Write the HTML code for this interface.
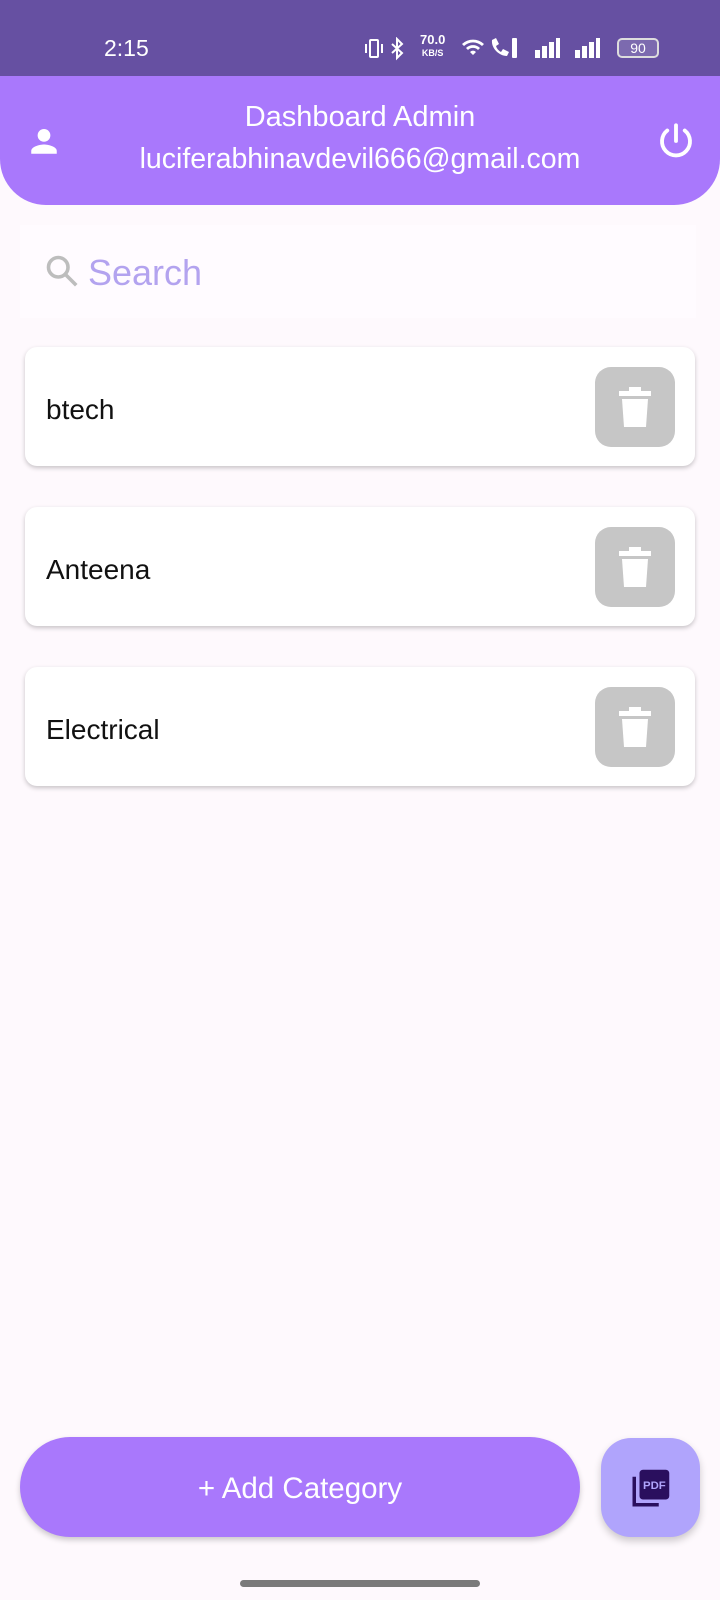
<!DOCTYPE html>
<html><head><meta charset="utf-8"><style>
*{margin:0;padding:0;box-sizing:border-box}
body{width:720px;height:1600px;background:#fef9fd;font-family:"Liberation Sans",sans-serif;position:relative;overflow:hidden}
.sb{position:absolute;left:0;top:0;width:720px;height:77px;background:#6650a2;color:#fff}
.hd{position:absolute;left:0;top:76px;width:720px;height:129px;background:#a978fc;border-radius:0 0 46px 46px;color:#fff;text-align:center}
.card{position:absolute;left:25px;width:670px;height:119px;background:#fff;border-radius:12px;box-shadow:0 2px 5px rgba(0,0,0,.22)}
.card span{position:absolute;left:21px;top:47px;font-size:28px;color:#111}
.tr{position:absolute;left:570px;top:20px;width:80px;height:80px;background:#c6c6c6;border-radius:16px}
</style></head><body>
<div class="sb">
<div style="position:absolute;left:104px;top:35px;font-size:23px">2:15</div>
<svg style="position:absolute;left:364px;top:37px" width="50" height="24" viewBox="0 0 50 24" fill="none" stroke="#fff" stroke-width="2"><rect x="6" y="3" width="8" height="17" rx="1"/><path d="M2 7v9M18 7v9"/><path d="M28 7l10 9-5 5V2l5 5-10 9"/></svg>
<div style="position:absolute;left:420px;top:34px;font-size:13px;line-height:12px;font-weight:bold;text-align:center">70.0<br><span style="font-size:9px">KB/S</span></div>
<svg style="position:absolute;left:460px;top:36px" width="180" height="24" viewBox="0 0 180 24" fill="#fff">
<path d="M2 8a16 16 0 0 1 22 0l-2 2a13 13 0 0 0-18 0zM6 12a10 10 0 0 1 14 0l-2 2a7 7 0 0 0-10 0zM10 16a4 4 0 0 1 6 0l-3 3z"/>
<path d="M32 4l4-2 3 6-3 2a10 10 0 0 0 5 6l2-3 6 3-2 4c-8 0-16-8-15-16z"/>
<rect x="52" y="2" width="5" height="20" rx="1"/>
<rect x="75" y="14" width="5" height="8"/><rect x="82" y="10" width="5" height="12"/><rect x="89" y="6" width="5" height="16"/><rect x="96" y="2" width="4" height="20"/>
<rect x="115" y="14" width="5" height="8"/><rect x="122" y="10" width="5" height="12"/><rect x="129" y="6" width="5" height="16"/><rect x="136" y="2" width="4" height="20"/>
</svg>
<div style="position:absolute;left:617px;top:38px;width:42px;height:20px;border:2px solid #ddd;border-radius:5px;font-size:14px;text-align:center;line-height:16px;background:rgba(255,255,255,.15)">90</div>
</div>
<div class="hd">
<div style="position:absolute;left:0;width:720px;top:25px;font-size:29px">Dashboard Admin</div>
<div style="position:absolute;left:0;width:720px;top:67px;font-size:28.5px">luciferabhinavdevil666@gmail.com</div>
<svg style="position:absolute;left:27px;top:48px" width="34" height="34" viewBox="0 0 24 24" fill="#fff"><circle cx="12" cy="8" r="4.5"/><path d="M3 21v-2c0-3 6-4.5 9-4.5s9 1.5 9 4.5v2z"/></svg>
<svg style="position:absolute;left:655px;top:44px" width="42" height="42" viewBox="0 0 24 24" fill="none" stroke="#fff" stroke-width="2.2" stroke-linecap="round"><path d="M12 3v9"/><path d="M7 6a8 8 0 1 0 10 0"/></svg>
</div>
<div style="position:absolute;left:20px;top:225px;width:676px;height:93px;background:#fffbff">
<svg style="position:absolute;left:24px;top:28px" width="36" height="36" viewBox="0 0 24 24" fill="none" stroke="#bdbdbd" stroke-width="2.4"><circle cx="9.5" cy="9.5" r="6.5"/><path d="M14.5 14.5l7 7"/></svg>
<div style="position:absolute;left:68px;top:27px;font-size:36px;color:#b3a3ef">Search</div>
</div>
<div class="card" style="top:347px"><span>btech</span><div class="tr"><svg style="margin:20px 0 0 24px" width="32" height="40" viewBox="0 0 16 20" fill="#fff"><rect x="0" y="2" width="16" height="2.5"/><rect x="5" y="0" width="6" height="3"/><path d="M1.5 6h13l-1 14h-11z"/></svg></div></div>
<div class="card" style="top:507px"><span>Anteena</span><div class="tr"><svg style="margin:20px 0 0 24px" width="32" height="40" viewBox="0 0 16 20" fill="#fff"><rect x="0" y="2" width="16" height="2.5"/><rect x="5" y="0" width="6" height="3"/><path d="M1.5 6h13l-1 14h-11z"/></svg></div></div>
<div class="card" style="top:667px"><span>Electrical</span><div class="tr"><svg style="margin:20px 0 0 24px" width="32" height="40" viewBox="0 0 16 20" fill="#fff"><rect x="0" y="2" width="16" height="2.5"/><rect x="5" y="0" width="6" height="3"/><path d="M1.5 6h13l-1 14h-11z"/></svg></div></div>
<div style="position:absolute;left:20px;top:1437px;width:560px;height:100px;background:#a978fc;border-radius:50px;box-shadow:0 3px 6px rgba(0,0,0,.2);color:#fff;font-size:29.5px;text-align:center;line-height:104px">+ Add Category</div>
<div style="position:absolute;left:601px;top:1438px;width:99px;height:99px;background:#b0a4fc;border-radius:30px;box-shadow:0 4px 8px rgba(0,0,0,.2)">
<svg style="position:absolute;left:28px;top:30px" width="42" height="42" viewBox="0 0 24 24"><path d="M2 5v17h15v-2H4V5z" fill="#2a0f5e"/><rect x="6" y="1" width="17" height="17" rx="2" fill="#2a0f5e"/><text x="14.5" y="12" font-size="6.5" font-weight="bold" fill="#b0a4fc" text-anchor="middle" font-family="Liberation Sans">PDF</text></svg>
</div>
<div style="position:absolute;left:240px;top:1580px;width:240px;height:7px;background:#7a7a7a;border-radius:4px"></div>
</body></html>
